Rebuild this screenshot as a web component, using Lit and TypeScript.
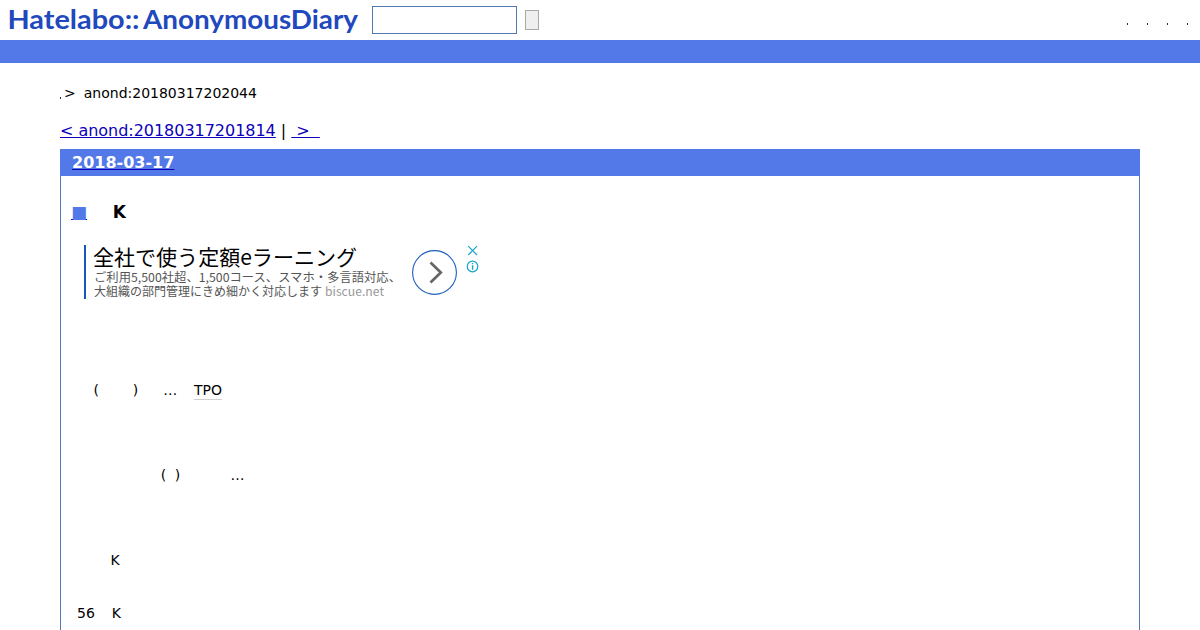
import { html, css, LitElement } from 'lit';
import { customElement, property } from 'lit/decorators.js';

@customElement('site-header')
class SiteHeader extends LitElement {
  static get styles() {
    return css`
      :host {
        display: block;
      }

      .top {
        display: flex;
        height: 40px;
        box-sizing: border-box;
        background: #fff;
      }

      .logo {
        flex: none;
        width: 372px;
        height: 40px;
      }

      .logo text {
        font-family: Lato, 'Liberation Sans', sans-serif;
        font-size: 26.5px;
        font-weight: 700;
        fill: #2148bd;
      }

      .search {
        display: flex;
        align-items: center;
        gap: 8px;
        height: 40px;
      }

      .search input {
        box-sizing: border-box;
        width: 145px;
        height: 28px;
        margin: 0;
        padding: 2px;
        border: 1px solid #5279b0;
        border-radius: 0;
        background: #fff;
      }

      .search button {
        box-sizing: border-box;
        width: 14px;
        height: 20px;
        padding: 0;
        border: 1px solid #a9a9a9;
        border-radius: 0;
        background: #efefef;
      }

      .menu {
        display: flex;
        gap: 19px;
        margin: 23px 12px 0 auto;
        padding: 0;
        list-style: none;
      }

      .menu li {
        width: 1px;
        height: 2px;
        background: #333;
      }

      .bar {
        height: 23px;
        background: #5279e7;
      }
    `;
  }

  render() {
    return html`
      <div class="top">
        <svg class="logo" viewBox="0 0 372 40">
          <text x="7.5" y="29" textLength="132" lengthAdjust="spacingAndGlyphs">Hatelabo::</text>
          <text x="143" y="29" textLength="215" lengthAdjust="spacingAndGlyphs">AnonymousDiary</text>
        </svg>
        <form class="search">
          <input type="text" />
          <button type="button"></button>
        </form>
        <ul class="menu">
          <li></li>
          <li></li>
          <li></li>
          <li></li>
        </ul>
      </div>
      <div class="bar"></div>
    `;
  }
}

@customElement('text-ad')
class TextAd extends LitElement {
  @property({ type: String })
  site = '';

  static get styles() {
    return css`
      :host {
        display: flex;
        width: 396px;
        height: 54px;
      }

      .copy {
        flex: none;
        box-sizing: border-box;
        width: 328px;
        height: 54px;
        border-left: 2px solid #1558b8;
        overflow: visible;
      }

      text {
        font-family: 'Noto Sans CJK JP', sans-serif;
        font-weight: 400;
      }

      .headline {
        font-size: 21px;
        fill: #000;
      }

      .detail {
        font-size: 12px;
        fill: #555;
      }

      .site {
        font-size: 12px;
        fill: #999;
      }

      .arrow {
        flex: none;
        width: 45px;
        height: 45px;
        margin-top: 5px;
      }

      .controls {
        flex: none;
        width: 13px;
        height: 30px;
        margin-left: 9px;
      }
    `;
  }

  render() {
    return html`
      <svg class="copy" viewBox="0 0 326 54">
        <text class="headline" x="7" y="19.5" textLength="264" lengthAdjust="spacingAndGlyphs">全社で使う定額eラーニング</text>
        <text class="detail" x="8" y="37" textLength="307" lengthAdjust="spacingAndGlyphs">ご利用5,500社超、1,500コース、スマホ・多言語対応、</text>
        <text class="detail" x="8" y="51" textLength="228" lengthAdjust="spacingAndGlyphs">大組織の部門管理にきめ細かく対応します</text>
        <text class="site" x="239" y="51" textLength="59" lengthAdjust="spacingAndGlyphs">${this.site}</text>
      </svg>
      <svg class="arrow" viewBox="0 0 45 45" fill="none">
        <circle cx="22.5" cy="22.5" r="21.9" stroke="#1f5fbf" stroke-width="1.1" />
        <path d="M18.5 12.5 L28.8 22.5 L18.5 32.5" stroke="#666" stroke-width="2.7" />
      </svg>
      <svg class="controls" viewBox="0 0 13 30" fill="none" stroke="#1aa5c8" stroke-width="1.2">
        <path d="M2.2 1.2 L11 10 M11 1.2 L2.2 10" />
        <circle cx="6.5" cy="21.5" r="5.3" />
        <path d="M6.6 20.3 V24.8 M6.6 18 V19.3" stroke-width="1.4" />
      </svg>
    `;
  }
}

@customElement('app-root')
class AppRoot extends LitElement {
  static get styles() {
    return css`
      :host {
        display: block;
        height: 630px;
        overflow: hidden;
        background: #fff;
        color: #000;
        font-family: 'DejaVu Sans', sans-serif;
        font-size: 14px;
      }

      .content {
        padding: 22px 60px 0;
      }

      .crumbs {
        height: 17px;
        line-height: 17px;
        white-space: pre;
      }

      .crumbs .home {
        display: inline-block;
        width: 1px;
        height: 2px;
        margin-right: 3px;
        background: #333;
        vertical-align: -1px;
      }

      .crumbs .current {
        margin-left: 8px;
      }

      .pager {
        margin-top: 19px;
        height: 20px;
        font-size: 16px;
        line-height: 20px;
        letter-spacing: -0.03px;
        white-space: pre;
      }

      a {
        color: #0c00b8;
      }

      .day {
        margin-top: 8px;
        height: 500px;
        box-sizing: border-box;
        border: 1px solid #5279b0;
        border-top: 0;
      }

      .day h2 {
        margin: 0 -1px;
        height: 27px;
        padding-left: 12px;
        background: #5279e7;
        font-size: 16px;
        line-height: 28px;
      }

      .day h2 span {
        color: #fff;
      }

      .day h3 {
        display: flex;
        gap: 26px;
        margin: 26px 0 0 10px;
        height: 20px;
        font-size: 17px;
        line-height: 20px;
      }

      .day h3 a {
        margin-right: -0.4px;
      }

      .day h3 span {
        color: #5279e7;
      }

      text-ad {
        margin: 23px 0 0 23px;
      }

      p {
        display: flex;
        margin: 0;
        height: 17px;
        line-height: 17px;
      }

      .first {
        margin: 83px 0 0 32.6px;
      }

      .second {
        margin: 68px 0 0 99.8px;
      }

      .third {
        margin: 68px 0 0 49.6px;
      }

      .fourth {
        margin: 36px 0 0 16px;
      }

      .close-wide {
        margin-left: 33.6px;
      }

      .close-narrow {
        margin-left: 8.4px;
      }

      .dots {
        margin-left: 25px;
      }

      .dots-far {
        margin-left: 50.4px;
      }

      .keyword {
        margin-left: 16.8px;
        height: 17px;
        border-bottom: 1px solid #d0d0d0;
      }

      .letter {
        margin-left: 17px;
      }
    `;
  }

  render() {
    return html`
      <site-header></site-header>
      <div class="content">
        <div class="crumbs"><span class="home"></span>&gt;<span class="current">anond:20180317202044</span></div>
        <div class="pager"><a href="#">&lt; anond:20180317201814</a> | <a href="#"> &gt;&nbsp;&nbsp;</a></div>
        <div class="day">
          <h2><a href="#"><span>2018-03-17</span></a></h2>
          <h3><a href="#"><span>■</span></a>K</h3>
          <text-ad site="biscue.net"></text-ad>
          <p class="first">
            <span>(</span><span class="close-wide">)</span><span class="dots">…</span><span class="keyword">TPO</span>
          </p>
          <p class="second"><span>(</span><span class="close-narrow">)</span><span class="dots-far">…</span></p>
          <p class="third">K</p>
          <p class="fourth"><span>56</span><span class="letter">K</span></p>
        </div>
      </div>
    `;
  }
}
